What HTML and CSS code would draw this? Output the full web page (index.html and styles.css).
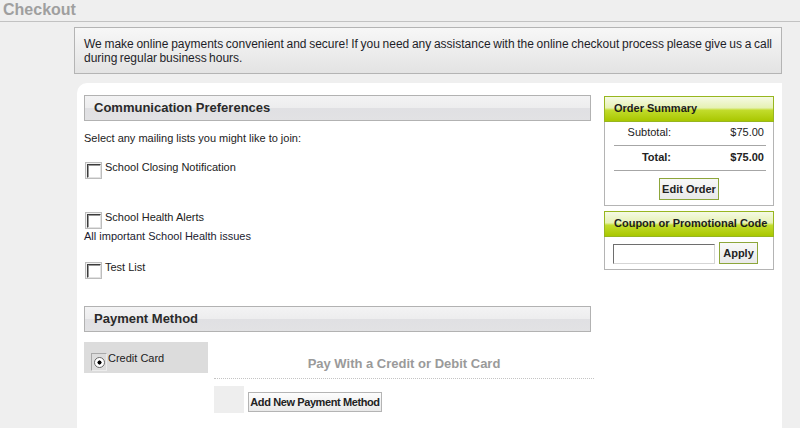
FILE: index.html
```html
<!DOCTYPE html>
<html lang="en">
<head>
<meta charset="utf-8">
<title>Checkout</title>
<link rel="stylesheet" href="styles.css">
</head>
<body>
<header class="title">Checkout</header>
<div class="notice">We make online payments convenient and secure! If you need any assistance with the online checkout process please give us a call during regular business hours.</div>
<main class="panel">
  <section class="main-col">
    <h2 class="sec-head">Communication Preferences</h2>
    <p class="intro">Select any mailing lists you might like to join:</p>
    <div class="opt opt1"><span class="cb"></span><span class="opt-label">School Closing Notification</span></div>
    <div class="opt opt2"><span class="cb"></span><span class="opt-label">School Health Alerts</span></div>
    <div class="opt-desc">All important School Health issues</div>
    <div class="opt opt3"><span class="cb"></span><span class="opt-label">Test List</span></div>
    <h2 class="sec-head pay-head">Payment Method</h2>
    <div class="pay">
      <div class="tab"><span class="radio"></span><span class="tab-label">Credit Card</span></div>
      <div class="pay-body">
        <h3 class="pay-title">Pay With a Credit or Debit Card</h3>
        <div class="dots"></div>
        <div class="add-row"><span class="sq"></span><button class="btn add-btn" type="button">Add New Payment Method</button></div>
      </div>
    </div>
  </section>
  <aside class="side">
    <div class="box">
      <div class="box-head">Order Summary</div>
      <div class="sum-row"><span class="sum-label">Subtotal:</span><span class="sum-val">$75.00</span></div>
      <div class="sum-row total"><span class="sum-label">Total:</span><span class="sum-val">$75.00</span></div>
      <div class="edit-wrap"><button class="btn green-btn" type="button">Edit Order</button></div>
    </div>
    <div class="box coupon">
      <div class="box-head">Coupon or Promotional Code</div>
      <div class="coupon-body"><input class="code" type="text"><button class="btn green-btn apply" type="button">Apply</button></div>
    </div>
  </aside>
</main>
</body>
</html>
```
FILE: styles.css
```css
* { box-sizing: border-box; }
html, body { margin: 0; padding: 0; }
body {
  background: #efefef;
  font-family: "Liberation Sans", Arial, sans-serif;
  color: #222;
  height: 428px;
  overflow: hidden;
}
.title {
  height: 22px;
  padding: 0 3px;
  font-size: 16px;
  line-height: 19px;
  font-weight: bold;
  color: #9f9f9f;
  border-bottom: 1px solid #c2c2c2;
}
.notice {
  margin: 5px 18px 0 74px;
  padding: 9px 9px 8px 9px;
  border: 1px solid #b4b4b4;
  background: linear-gradient(#f7f7f7, #e3e3e3);
  font-size: 12px;
  line-height: 14px;
  text-align: justify;
  word-spacing: -1px;
  color: #1e1e28;
}
.panel {
  display: flex;
  align-items: flex-start;
  height: 345px;
  margin: 9px 18px 0 77px;
  padding: 12px 8px 0 7px;
  background: #fff;
  border-radius: 10px 0 0 0;
}
.main-col { width: 507px; }
.sec-head {
  margin: 0;
  height: 26px;
  padding-left: 9px;
  border: 1px solid #b2b2b2;
  background: linear-gradient(#f3f3f4 0%, #ededee 48%, #e0e0e3 52%, #e2e2e4 100%);
  font-size: 13px;
  line-height: 24px;
  font-weight: bold;
  color: #2a2a2a;
}
.intro {
  margin: 11px 0 0;
  font-size: 11px;
  line-height: 13px;
}
.opt {
  display: flex;
  align-items: flex-start;
  font-size: 11px;
  line-height: 13px;
}
.opt1 { margin-top: 17px; }
.opt2 { margin-top: 33px; }
.opt3 { margin-top: 19px; }
.cb {
  display: flex;
  align-items: center;
  justify-content: center;
  width: 17px;
  height: 17px;
  margin: 0 3px 0 1px;
  border: 1px solid #bdbdbd;
  background: #f1f1f1;
  flex: none;
}
.cb::before {
  content: "";
  width: 12px;
  height: 12px;
  border: 1px solid;
  border-color: #3c3c3c #e2e2e2 #e2e2e2 #3c3c3c;
  background: #fff;
  box-shadow: inset 1px 1px 0 #9a9a9a;
}
.opt-label { margin-top: -1px; }
.opt-desc {
  margin-top: 1px;
  font-size: 11px;
  line-height: 13px;
  color: #1c1c30;
}
.pay-head { margin-top: 27px; }
.pay {
  display: flex;
  align-items: flex-start;
  margin-top: 10px;
}
.tab {
  display: flex;
  align-items: flex-start;
  width: 124px;
  height: 31px;
  padding: 11px 0 0 7px;
  background: #dcdcdc;
  font-size: 11px;
  line-height: 13px;
  flex: none;
}
.radio {
  display: flex;
  align-items: center;
  justify-content: center;
  width: 16px;
  height: 18px;
  border: 1px solid;
  border-color: #a8a8a8 #ececec #ececec #a8a8a8;
  flex: none;
}
.radio::before {
  content: "";
  width: 9px;
  height: 9px;
  border-radius: 50%;
  border: 1px solid #6a6a6a;
  background: radial-gradient(circle, #000 0 1.8px, #fff 2.3px);
}
.tab-label { margin: -1px 0 0 1px; }
.pay-body {
  width: 380px;
  margin-left: 6px;
  flex: none;
}
.pay-title {
  margin: 14px 0 0;
  font-size: 13px;
  line-height: 16px;
  font-weight: bold;
  color: #9a9a9a;
  text-align: center;
}
.dots {
  margin-top: 6px;
  border-top: 1px dotted #c4c4c4;
}
.add-row {
  display: flex;
  align-items: flex-start;
  margin-top: 7px;
}
.sq {
  width: 30px;
  height: 27px;
  background: #eeeeee;
  flex: none;
}
.btn {
  font-family: "Liberation Sans", Arial, sans-serif;
  font-size: 11px;
  font-weight: bold;
  color: #222;
  cursor: pointer;
  border-radius: 0;
}
.add-btn {
  margin: 6px 0 0 4px;
  height: 20px;
  width: 134px;
  padding: 0;
  border: 1px solid #b4b4b4;
  background: linear-gradient(#fdfdfd, #e9e9e9);
  letter-spacing: -0.4px;
}
.side {
  width: 170px;
  margin: 1px 0 0 13px;
  flex: none;
}
.box {
  border: 1px solid #b4b4b4;
  border-top: 0;
  background: #fff;
}
.box-head {
  margin: 0 -1px;
  height: 26px;
  padding-left: 9px;
  border: 1px solid #97b61f;
  background: linear-gradient(#f5fae4 0%, #e6f1b4 45%, #c2dc2c 55%, #a9c700 100%);
  font-size: 11px;
  line-height: 22px;
  font-weight: bold;
  color: #1c1c1c;
}
.sum-row {
  display: flex;
  align-items: center;
  height: 24px;
  margin: 0 7px 0 9px;
  padding-bottom: 2px;
  border-bottom: 1px solid #a6a6a6;
  font-size: 11px;
  line-height: 13px;
}
.sum-row.total {
  height: 25px;
  padding-bottom: 1px;
  font-weight: bold;
}
.sum-label {
  width: 57px;
  text-align: right;
}
.sum-val {
  flex: 1;
  text-align: right;
  padding-right: 2px;
}
.edit-wrap {
  display: flex;
  justify-content: center;
  padding: 7px 0 5px;
}
.green-btn {
  height: 22px;
  padding: 0 2px;
  border: 1px solid #8da63a;
  background: linear-gradient(#f8f8f8, #e9e9e9);
}
.edit-wrap .green-btn { width: 60px; }
.coupon { margin-top: 5px; }
.coupon-body {
  display: flex;
  align-items: flex-end;
  padding: 5px 0 5px 8px;
}
.code {
  width: 102px;
  height: 20px;
  margin: 0;
  padding: 0 2px;
  border: 1px solid;
  border-color: #6e6e6e #d6d6d6 #d6d6d6 #6e6e6e;
  background: #fff;
  font-size: 11px;
}
.apply {
  width: 39px;
  margin-left: 4px;
}
```
